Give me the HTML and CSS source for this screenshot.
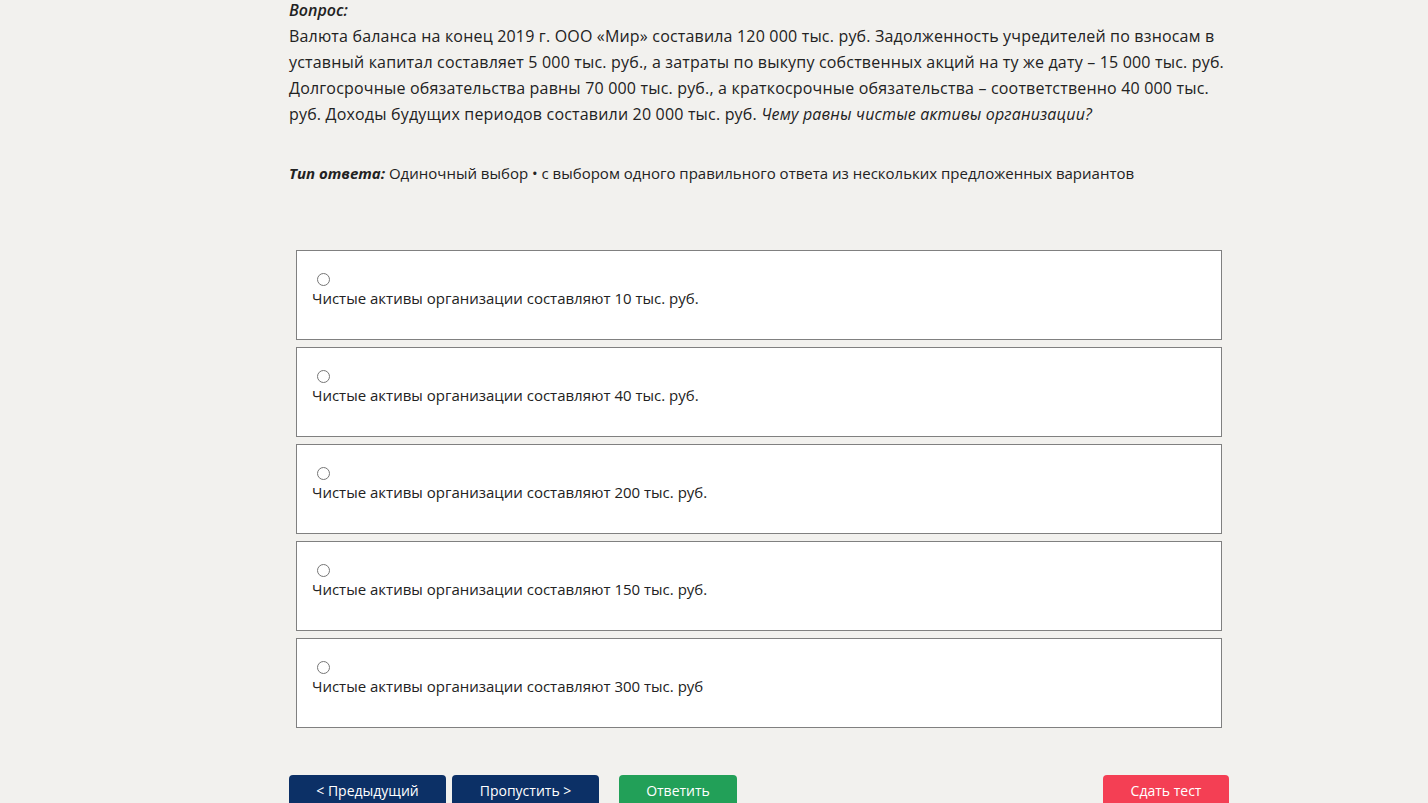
FILE: index.html
```html
<!DOCTYPE html>
<html lang="ru">
<head>
    <meta charset="UTF-8">
    <title>Тест</title>
    <link rel="stylesheet" href="styles.css">
</head>
<body>
    <div class="test">
        <div class="question">
            <p class="label"><i>Вопрос:</i></p>
            <p class="text">Валюта баланса на конец 2019 г. ООО «Мир» составила 120 000 тыс. руб. Задолженность учредителей по взносам в уставный капитал составляет 5 000 тыс. руб., а затраты по выкупу собственных акций на ту же дату – 15 000 тыс. руб. Долгосрочные обязательства равны 70 000 тыс. руб., а краткосрочные обязательства – соответственно 40 000 тыс. руб. Доходы будущих периодов составили 20 000 тыс. руб. <i>Чему равны чистые активы организации?</i></p>
        </div>
        <p class="type"><b><i>Тип ответа:</i></b> Одиночный выбор • с выбором одного правильного ответа из нескольких предложенных вариантов</p>

        <div class="answers">
            <label class="answer">
                <input type="radio" name="answer">
                <span>Чистые активы организации составляют 10 тыс. руб.</span>
            </label>
            <label class="answer">
                <input type="radio" name="answer">
                <span>Чистые активы организации составляют 40 тыс. руб.</span>
            </label>
            <label class="answer">
                <input type="radio" name="answer">
                <span>Чистые активы организации составляют 200 тыс. руб.</span>
            </label>
            <label class="answer">
                <input type="radio" name="answer">
                <span>Чистые активы организации составляют 150 тыс. руб.</span>
            </label>
            <label class="answer">
                <input type="radio" name="answer">
                <span>Чистые активы организации составляют 300 тыс. руб</span>
            </label>
        </div>

        <div class="buttons">
            <button class="btn btn-nav">&lt; Предыдущий</button>
            <button class="btn btn-nav">Пропустить &gt;</button>
            <button class="btn btn-answer">Ответить</button>
            <button class="btn btn-finish">Сдать тест</button>
        </div>
    </div>
</body>
</html>
```

FILE: styles.css
```css
* {
    margin: 0;
    padding: 0;
    box-sizing: border-box;
}
html, body {
    height: 100%;
    overflow: hidden;
}
body {
    background: #f2f1ee;
    color: #222;
    font-family: "Open Sans", "Liberation Sans", sans-serif;
}
.test {
    width: 940px;
    margin: -3px 0 0 289px;
}
.question {
    font-size: 16px;
    line-height: 26px;
    letter-spacing: 0.18px;
}
.question .label {
    font-weight: 600;
    letter-spacing: 0;
}
.type {
    margin-top: 33px;
    font-size: 15px;
    line-height: 26px;
}
.answers {
    margin: 64px 7px 0;
    display: flex;
    flex-direction: column;
    gap: 7px;
}
.answer {
    display: flex;
    flex-direction: column;
    align-items: flex-start;
    height: 90px;
    padding: 22px 15px 0;
    background: #fff;
    border: 1px solid #808080;
    font-size: 15px;
    line-height: 20px;
}
.answer input {
    width: 13px;
    height: 13px;
    margin: 0 0 2px 5px;
}
.buttons {
    display: flex;
    gap: 6px;
    margin-top: 47px;
}
.btn {
    height: 38px;
    padding: 0 14px 6px;
    border: 0;
    border-radius: 4px;
    color: #fff;
    font-family: "Open Sans", "Liberation Sans", sans-serif;
    font-size: 14px;
    line-height: 32px;
}
.btn-nav {
    background: #0c3066;
}
.btn-nav:first-child {
    width: 157px;
}
.btn-nav:nth-child(2) {
    width: 147px;
}
.btn-answer {
    width: 118px;
    margin-left: 14px;
    background: #22a058;
}
.btn-finish {
    width: 126px;
    margin-left: auto;
    background: #f43f54;
}
```
